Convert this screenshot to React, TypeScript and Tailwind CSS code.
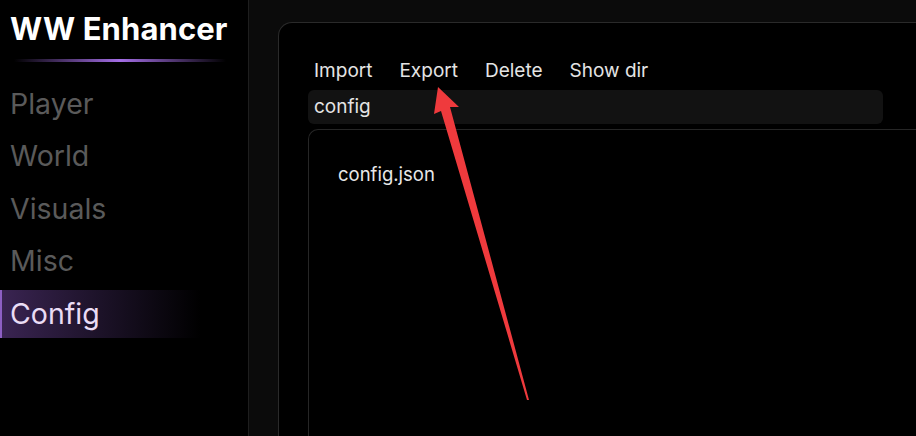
import React from 'react';

const navItems = ['Player', 'World', 'Visuals', 'Misc', 'Config'];
const actions = ['Import', 'Export', 'Delete', 'Show dir'];

const App: React.FC = () => {
  const active = 'Config';

  return (
    <div
      className="relative flex h-[436px] w-[916px] overflow-hidden bg-black text-white"
      style={{ fontFamily: 'Inter, "Noto Sans", sans-serif' }}
    >
      {/* Sidebar */}
      <aside className="flex w-[249px] shrink-0 flex-col border-r border-[#1e1e1e] bg-black">
        <h1 className="mt-[10px] pl-[10px] text-[31px] font-bold leading-[38px] tracking-[0.1px] text-white">
          WW Enhancer
        </h1>
        <div className="ml-[14px] mt-[11px] h-[3px] w-[212px] bg-gradient-to-r from-transparent via-[#a46ee6] to-transparent"></div>
        <nav className="mt-[18px] flex flex-col gap-[4.5px]">
          {navItems.map((item) =>
            item === active ? (
              <div
                key={item}
                className="flex h-[48px] w-[200px] items-center border-l-2 border-[#8d5fc4] bg-gradient-to-r from-[#3a2452] via-[#1c1228] to-transparent pl-[8px] text-[28.5px] text-[#eadcf5]"
              >
                {item}
              </div>
            ) : (
              <div
                key={item}
                className="flex h-[48px] items-center pl-[10px] text-[28.5px] text-[#5a5a5a]"
              >
                {item}
              </div>
            )
          )}
        </nav>
      </aside>

      {/* Main area */}
      <main className="flex flex-1 bg-[#0b0b0b] pl-[29px] pt-[22px]">
        <section className="flex flex-1 flex-col rounded-tl-[14px] border-l border-t border-[#2a2a2a] bg-black pl-[29px] pt-[35px]">
          <div className="flex h-[26px] items-center gap-[15px]">
            {actions.map((a) => (
              <button key={a} className="px-[6px] text-[19px] leading-[26px] text-[#e4e4e4]">
                {a}
              </button>
            ))}
          </div>
          <div className="mt-[6px] flex h-[34px] w-[575px] items-center rounded-[6px] bg-[#121212] px-[6px] text-[19px] text-[#e4e4e4]">
            config
          </div>
          <div className="mt-[5px] flex-1 rounded-tl-[10px] border-l border-t border-[#262626] bg-black pl-[29px] pt-[32px]">
            <div className="text-[18.5px] leading-[24px] text-[#e8e8e8]">config.json</div>
          </div>
        </section>
      </main>

      {/* Red annotation arrow */}
      <svg className="pointer-events-none absolute left-0 top-0" width="916" height="436">
        <polygon
          points="438,87 459,107 450,107 529,400 527,400 441,111 434,114"
          fill="#ef3a3d"
        />
      </svg>
    </div>
  );
};

export default App;
